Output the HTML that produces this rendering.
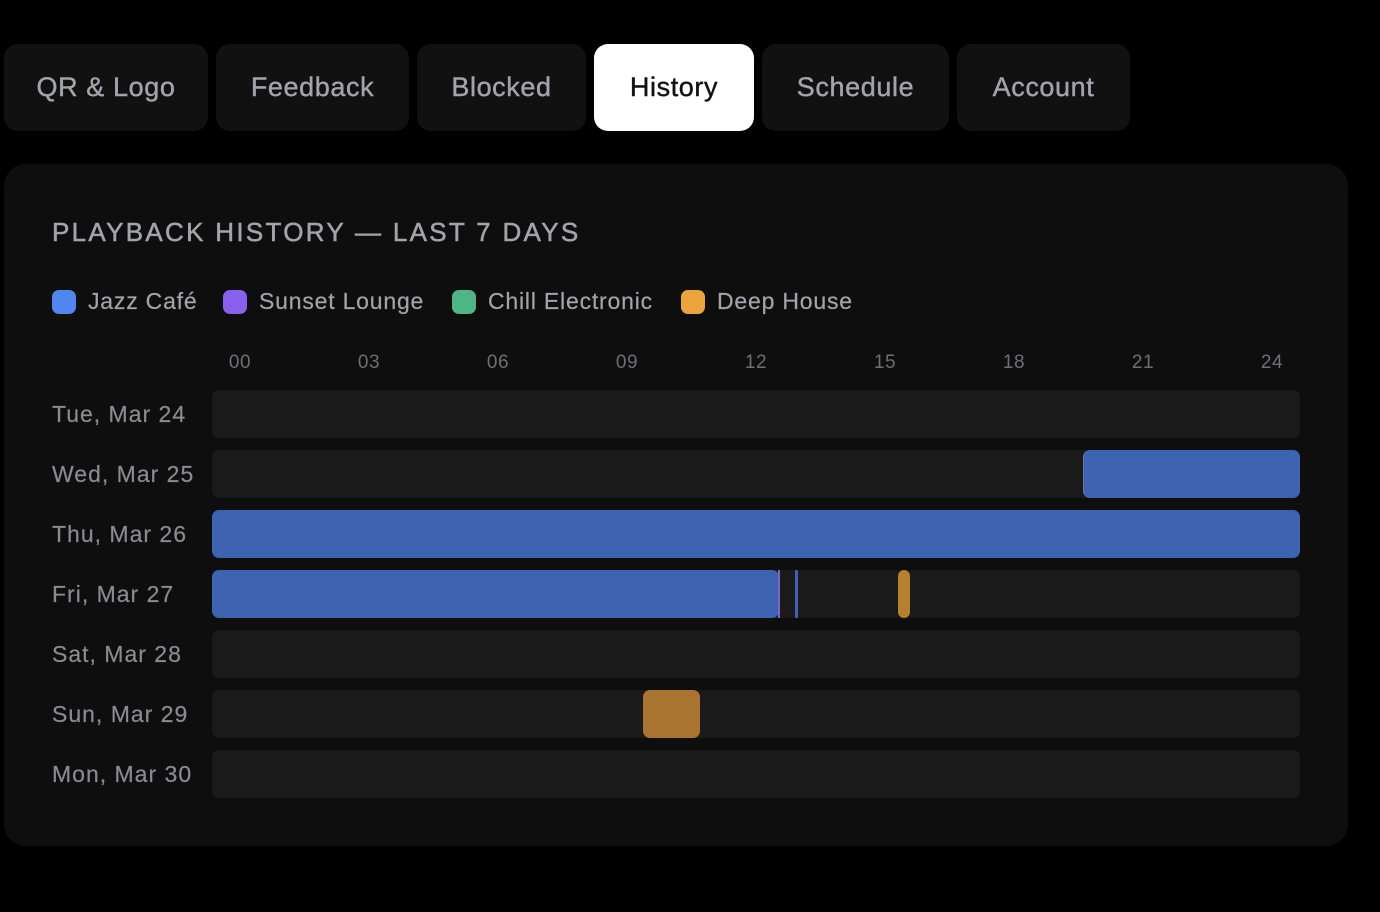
<!DOCTYPE html>
<html><head><meta charset="utf-8"><style>
*{margin:0;padding:0;box-sizing:border-box}
body{width:1380px;height:912px;background:#000;font-family:"Liberation Sans",sans-serif;position:relative;overflow:hidden}
.tab{position:absolute;top:44px;height:87px;border-radius:14px;background:#111112;color:#a3a3ab;font-size:27px;letter-spacing:0.6px;display:flex;align-items:center;justify-content:center;-webkit-text-stroke:0.4px #a3a3ab}
.tab.on{background:#fff;color:#111;-webkit-text-stroke:0.4px #111}
.card{position:absolute;left:4px;top:164px;width:1344px;height:682px;background:#0e0e0f;border-radius:22px}
.a{position:absolute}
.title{left:52px;top:217px;font-size:26px;letter-spacing:2.3px;color:#a3a3ab;-webkit-text-stroke:0.5px #a3a3ab}
.lg{top:288px;font-size:23px;letter-spacing:0.8px;color:#a3a3ab;display:flex;align-items:center;-webkit-text-stroke:0.2px #a3a3ab}
.dot{width:24px;height:24px;border-radius:7px;margin-right:12px}
.ax{top:352px;font-size:19px;color:#6e6e75;width:60px;text-align:center;letter-spacing:0.5px}
.lab{left:52px;font-size:23px;letter-spacing:1px;color:#8a8a92;-webkit-text-stroke:0.2px #8a8a92}
.tr{left:212px;width:1088px;height:48px;background:#1a1a1b;border-radius:7px}
.b{position:absolute;background:#3e63b0;border-radius:7px}
</style></head><body>
<div class="tab" style="left:4px;width:204px">QR &amp; Logo</div>
<div class="tab" style="left:216px;width:193px">Feedback</div>
<div class="tab" style="left:417px;width:169px">Blocked</div>
<div class="tab on" style="left:594px;width:160px">History</div>
<div class="tab" style="left:762px;width:187px">Schedule</div>
<div class="tab" style="left:957px;width:173px">Account</div>
<div class="card"></div>
<div class="a title">PLAYBACK HISTORY — LAST 7 DAYS</div>
<div class="a lg" style="left:52px"><span class="dot" style="background:#4f86f0"></span>Jazz Café</div>
<div class="a lg" style="left:223px"><span class="dot" style="background:#8862ec"></span>Sunset Lounge</div>
<div class="a lg" style="left:452px"><span class="dot" style="background:#4fb584"></span>Chill Electronic</div>
<div class="a lg" style="left:681px"><span class="dot" style="background:#e9a43c"></span>Deep House</div>
<div class="a ax" style="left:210px">00</div>
<div class="a ax" style="left:339px">03</div>
<div class="a ax" style="left:468px">06</div>
<div class="a ax" style="left:597px">09</div>
<div class="a ax" style="left:726px">12</div>
<div class="a ax" style="left:855px">15</div>
<div class="a ax" style="left:984px">18</div>
<div class="a ax" style="left:1113px">21</div>
<div class="a ax" style="left:1242px">24</div>

<div class="a lab" style="top:401px">Tue, Mar 24</div>
<div class="a tr" style="top:390px"></div>
<div class="a lab" style="top:461px">Wed, Mar 25</div>
<div class="a tr" style="top:450px"><div class="b" style="left:871px;width:217px;height:48px;border-left:1px solid #6b6fb8"></div></div>
<div class="a lab" style="top:521px">Thu, Mar 26</div>
<div class="a tr" style="top:510px"><div class="b" style="left:0;width:1088px;height:48px"></div></div>
<div class="a lab" style="top:581px">Fri, Mar 27</div>
<div class="a tr" style="top:570px">
<div class="b" style="left:0;width:567px;height:48px"></div>
<div class="b" style="left:566px;width:2px;height:48px;background:#7a65c8;border-radius:0"></div>
<div class="b" style="left:583px;width:3px;height:48px;border-radius:1px"></div>
<div class="b" style="left:686px;width:12px;height:48px;background:#b5802f;border-radius:6px"></div>
</div>
<div class="a lab" style="top:641px">Sat, Mar 28</div>
<div class="a tr" style="top:630px"></div>
<div class="a lab" style="top:701px">Sun, Mar 29</div>
<div class="a tr" style="top:690px"><div class="b" style="left:431px;width:57px;height:48px;background:#a87430"></div></div>
<div class="a lab" style="top:761px">Mon, Mar 30</div>
<div class="a tr" style="top:750px"></div>
</body></html>
